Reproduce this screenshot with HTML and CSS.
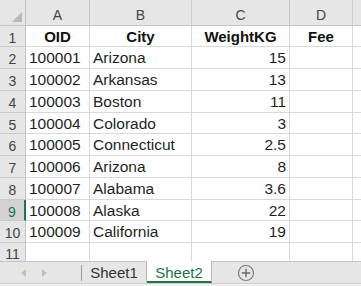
FILE: index.html
```html
<!doctype html>
<html>
<head>
<meta charset="utf-8">
<link rel="stylesheet" href="styles.css">
<title>Sheet2</title>
</head>
<body>
<div class="sheet">
  <div class="corner"><span class="tri"></span></div>
  <div class="colhead">A</div>
  <div class="colhead">B</div>
  <div class="colhead">C</div>
  <div class="colhead">D</div>
  <div class="colhead edge"></div>

  <div class="rowhead">1</div>
  <div class="cell bold center">OID</div>
  <div class="cell bold center">City</div>
  <div class="cell bold center">WeightKG</div>
  <div class="cell bold center">Fee</div>
  <div class="cell edge"></div>

  <div class="rowhead">2</div>
  <div class="cell">100001</div>
  <div class="cell">Arizona</div>
  <div class="cell num">15</div>
  <div class="cell"></div>
  <div class="cell edge"></div>

  <div class="rowhead">3</div>
  <div class="cell">100002</div>
  <div class="cell">Arkansas</div>
  <div class="cell num">13</div>
  <div class="cell"></div>
  <div class="cell edge"></div>

  <div class="rowhead">4</div>
  <div class="cell">100003</div>
  <div class="cell">Boston</div>
  <div class="cell num">11</div>
  <div class="cell"></div>
  <div class="cell edge"></div>

  <div class="rowhead">5</div>
  <div class="cell">100004</div>
  <div class="cell">Colorado</div>
  <div class="cell num">3</div>
  <div class="cell"></div>
  <div class="cell edge"></div>

  <div class="rowhead">6</div>
  <div class="cell">100005</div>
  <div class="cell">Connecticut</div>
  <div class="cell num">2.5</div>
  <div class="cell"></div>
  <div class="cell edge"></div>

  <div class="rowhead">7</div>
  <div class="cell">100006</div>
  <div class="cell">Arizona</div>
  <div class="cell num">8</div>
  <div class="cell"></div>
  <div class="cell edge"></div>

  <div class="rowhead">8</div>
  <div class="cell">100007</div>
  <div class="cell">Alabama</div>
  <div class="cell num">3.6</div>
  <div class="cell"></div>
  <div class="cell edge"></div>

  <div class="rowhead selected">9</div>
  <div class="cell">100008</div>
  <div class="cell">Alaska</div>
  <div class="cell num">22</div>
  <div class="cell"></div>
  <div class="cell edge"></div>

  <div class="rowhead">10</div>
  <div class="cell">100009</div>
  <div class="cell">California</div>
  <div class="cell num">19</div>
  <div class="cell"></div>
  <div class="cell edge"></div>

  <div class="rowhead last">11</div>
  <div class="cell last"></div>
  <div class="cell last"></div>
  <div class="cell last"></div>
  <div class="cell last"></div>
  <div class="cell last edge"></div>
</div>

<div class="tabbar">
  <div class="nav">
    <span class="arrow left"></span>
    <span class="arrow right"></span>
  </div>
  <div class="tab">Sheet1</div>
  <div class="tab active">Sheet2</div>
  <div class="add">
    <svg width="18" height="18" viewBox="0 0 18 18">
      <circle cx="9" cy="9" r="7.5" fill="none" stroke="#7a7a7a" stroke-width="1.2"/>
      <path d="M9 4.8v8.4M4.8 9h8.4" stroke="#6a6a6a" stroke-width="1.4"/>
    </svg>
  </div>
</div>
<div class="footer"></div>
</body>
</html>
```

FILE: styles.css
```css
* {
    box-sizing: border-box;
}
body {
    margin: 0;
    width: 361px;
    height: 286px;
    overflow: hidden;
    background: white;
    font-family: "Liberation Sans", Arial, sans-serif;
    color: #1f1f1f;
}
.sheet {
    display: grid;
    grid-template-columns: 26px 64px 102px 98px 63px 8px;
    grid-template-rows: 26px 21px 22px 22px 22px 21px 22px 22px 22px 21px 22px 18px;
    height: 261px;
    overflow: hidden;
}
.corner {
    position: relative;
    background: #e6e6e6;
    border-right: 1px solid #c4c4c4;
    border-bottom: 1px solid #c4c4c4;
}
.corner .tri {
    position: absolute;
    right: 3px;
    bottom: 3px;
    width: 0;
    height: 0;
    border-left: 10px solid transparent;
    border-bottom: 10px solid #b9b9b9;
}
.colhead {
    background: #e6e6e6;
    border-right: 1px solid #c9c9c9;
    border-bottom: 1px solid #c4c4c4;
    color: #444;
    font-size: 14px;
    text-align: center;
    padding-top: 7px;
}
.colhead.edge {
    border-right: 0;
}
.rowhead {
    background: #e6e6e6;
    border-right: 1px solid #c4c4c4;
    border-bottom: 1px solid #c9c9c9;
    color: #444;
    font-size: 14px;
    line-height: 16px;
    text-align: center;
    padding-top: 4px;
}
.rowhead.selected {
    background: #d2d2d2;
    color: #217346;
    border-right: 2px solid #217346;
}
.rowhead.last {
    padding-top: 3px;
    border-bottom: 0;
}
.cell {
    border-right: 1px solid #d9d9d9;
    border-bottom: 1px solid #d9d9d9;
    font-size: 15.5px;
    line-height: 18px;
    padding: 2px 3px 0 3px;
    white-space: nowrap;
    overflow: hidden;
}
.cell.last {
    border-bottom: 0;
}
.cell.edge {
    border-right: 0;
}
.bold {
    font-weight: bold;
    font-size: 15px;
    color: #111;
}
.center {
    text-align: center;
}
.num {
    text-align: right;
}
.tabbar {
    display: flex;
    align-items: stretch;
    height: 22px;
    background: #e6e6e6;
    border-top: 1px solid #c6c6c6;
}
.nav {
    display: flex;
    align-items: center;
    gap: 16px;
    width: 82px;
    padding-left: 21px;
    border-right: 1px solid #9a9a9a;
    margin: 3px 0 2px 0;
}
.arrow {
    width: 0;
    height: 0;
    border-top: 4px solid transparent;
    border-bottom: 4px solid transparent;
}
.arrow.left {
    border-right: 5px solid #c0c0c0;
}
.arrow.right {
    border-left: 5px solid #c0c0c0;
}
.tab {
    width: 65px;
    font-size: 15px;
    color: #333;
    text-align: center;
    padding-top: 2px;
    border-right: 1px solid #b5b5b5;
}
.tab.active {
    background: white;
    color: #217346;
    border-bottom: 2px solid #217346;
    margin-top: -1px;
    padding-top: 3px;
}
.add {
    display: flex;
    align-items: center;
    padding-left: 25px;
}
.footer {
    height: 3px;
    background: #f0f0f0;
    border-top: 1px solid #cfcfcf;
}
```
